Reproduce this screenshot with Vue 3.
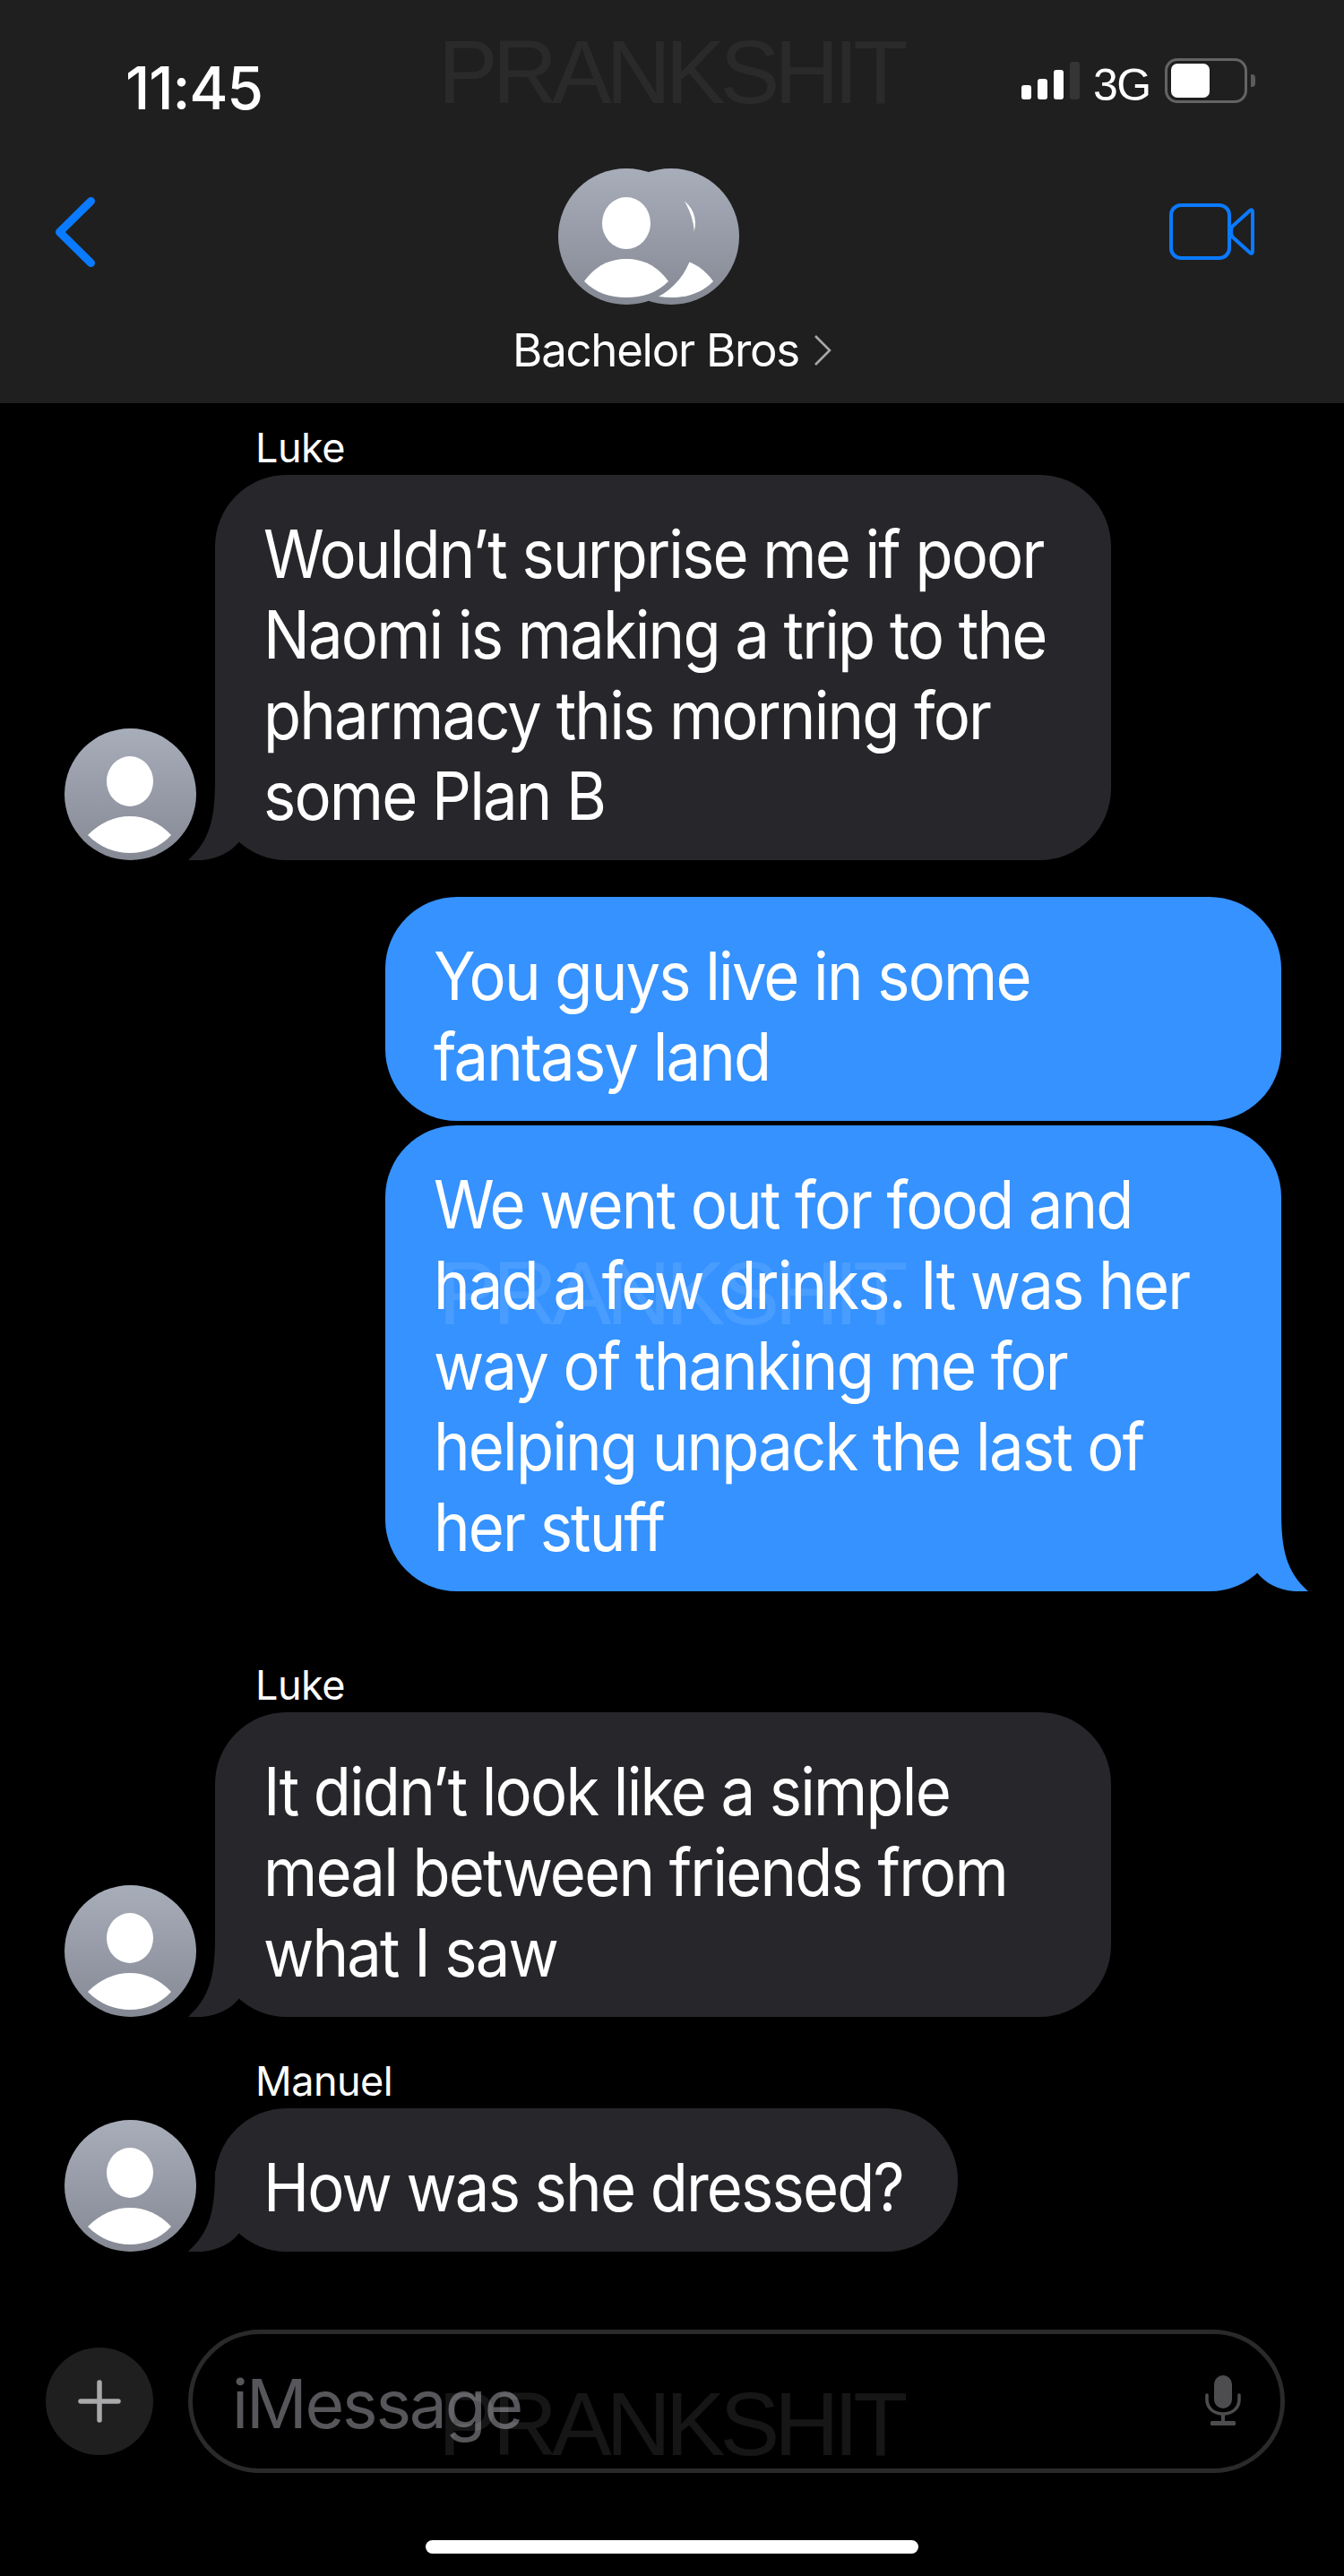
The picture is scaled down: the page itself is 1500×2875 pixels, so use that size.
<script setup>
const lukeOne = ['Wouldn’t surprise me if poor', 'Naomi is making a trip to the', 'pharmacy this morning for', 'some Plan B']
const mineOne = ['You guys live in some', 'fantasy land']
const mineTwo = ['We went out for food and', 'had a few drinks. It was her', 'way of thanking me for', 'helping unpack the last of', 'her stuff']
const lukeTwo = ['It didn’t look like a simple', 'meal between friends from', 'what I saw']
</script>

<template>
  <div class="page">
    <header class="head">
      <div class="status">
        <span class="time">11:45</span>
        <div class="status-right">
          <div class="bars"><i class="b1"></i><i class="b2"></i><i class="b3"></i><i class="b4"></i></div>
          <span class="net">3G</span>
          <div class="battery"><div class="fill"></div></div>
          <div class="nub"></div>
        </div>
      </div>
      <div class="nav">
        <svg class="back" viewBox="0 0 44 78" width="44" height="78"><path d="M39.5 4.5 L4.5 39 L39.5 73.5" fill="none" stroke="#0a7aff" stroke-width="9" stroke-linecap="round" stroke-linejoin="round"/></svg>
        <svg class="group" viewBox="0 0 202 152" width="202" height="152">
          <defs>
            <linearGradient id="gg" x1="0" y1="0" x2="0" y2="1"><stop offset="0" stop-color="#a8adba"/><stop offset="1" stop-color="#858994"/></linearGradient>
            <clipPath id="rc"><circle cx="126" cy="76" r="76"/></clipPath>
          </defs>
          <circle cx="126" cy="76" r="76" fill="url(#gg)"/>
          <g clip-path="url(#rc)">
            <ellipse cx="126" cy="61" rx="27" ry="29" fill="#fff"/>
            <path d="M79 126 C92 108 108 101 126 101 C144 101 160 108 173 126 C160 139 144 144 126 144 C108 144 92 139 79 126Z" fill="#fff"/>
          </g>
          <circle cx="76" cy="76" r="76" fill="url(#gg)"/>
          <ellipse cx="76" cy="61" rx="27" ry="29" fill="#fff"/>
          <path d="M29 126 C42 108 58 101 76 101 C94 101 110 108 123 126 C110 139 94 144 76 144 C58 144 42 139 29 126Z" fill="#fff"/>
        </svg>
        <svg class="video" viewBox="0 0 95 63" width="95" height="63">
          <rect x="2" y="2" width="65" height="59" rx="11" fill="none" stroke="#0a7aff" stroke-width="4"/>
          <path d="M70 26 L90 8 Q93 6 93 10 L93 53 Q93 57 90 55 L70 37 Q68 31.5 70 26Z" fill="none" stroke="#0a7aff" stroke-width="4" stroke-linejoin="round"/>
        </svg>
      </div>
      <div class="title">
        <span>Bachelor Bros</span>
        <svg viewBox="0 0 20 34" width="20" height="34"><path d="M2 1 L18 17 L2 33" fill="none" stroke="#a8a8a8" stroke-width="2.6"/></svg>
      </div>
    </header>

    <main class="thread">
      <div class="name first">Luke</div>
      <div class="row">
        <svg class="avatar" viewBox="0 0 147 147" width="147" height="147">
          <defs><linearGradient id="ag" x1="0" y1="0" x2="0" y2="1"><stop offset="0" stop-color="#a8adba"/><stop offset="1" stop-color="#858994"/></linearGradient></defs>
          <circle cx="73.5" cy="73.5" r="73.5" fill="url(#ag)"/>
          <ellipse cx="73" cy="59" rx="26" ry="28" fill="#fff"/>
          <path d="M26 119 C40 105 56 98 73 98 C90 98 106 105 119 119 C106 133 90 139 73 139 C56 139 40 133 26 119Z" fill="#fff"/>
        </svg>
        <div class="bubble in wide">
          <svg class="tail tail-l" viewBox="0 0 110 90" width="110" height="90"><path d="M30 0 C30 45 24 68 0 90 C26 92 46 84 58 68 L110 90 L110 0Z" fill="#27272b"/></svg>
          <div class="text"><div v-for="l in lukeOne" :key="l">{{ l }}</div></div>
        </div>
      </div>

      <div class="bubble out mine-first">
        <div class="text"><div v-for="l in mineOne" :key="l">{{ l }}</div></div>
      </div>
      <div class="bubble out mine-next">
        <svg class="tail tail-r" viewBox="0 0 110 90" width="110" height="90"><path d="M80 0 C80 45 86 68 110 90 C84 92 64 84 52 68 L0 90 L0 0Z" fill="#3592ff"/></svg>
        <div class="text"><div v-for="l in mineTwo" :key="l">{{ l }}</div></div>
      </div>

      <div class="name second">Luke</div>
      <div class="row">
        <svg class="avatar" viewBox="0 0 147 147" width="147" height="147">
          <circle cx="73.5" cy="73.5" r="73.5" fill="url(#ag)"/>
          <ellipse cx="73" cy="59" rx="26" ry="28" fill="#fff"/>
          <path d="M26 119 C40 105 56 98 73 98 C90 98 106 105 119 119 C106 133 90 139 73 139 C56 139 40 133 26 119Z" fill="#fff"/>
        </svg>
        <div class="bubble in wide">
          <svg class="tail tail-l" viewBox="0 0 110 90" width="110" height="90"><path d="M30 0 C30 45 24 68 0 90 C26 92 46 84 58 68 L110 90 L110 0Z" fill="#27272b"/></svg>
          <div class="text"><div v-for="l in lukeTwo" :key="l">{{ l }}</div></div>
        </div>
      </div>

      <div class="name third">Manuel</div>
      <div class="row">
        <svg class="avatar" viewBox="0 0 147 147" width="147" height="147">
          <circle cx="73.5" cy="73.5" r="73.5" fill="url(#ag)"/>
          <ellipse cx="73" cy="59" rx="26" ry="28" fill="#fff"/>
          <path d="M26 119 C40 105 56 98 73 98 C90 98 106 105 119 119 C106 133 90 139 73 139 C56 139 40 133 26 119Z" fill="#fff"/>
        </svg>
        <div class="bubble in short">
          <svg class="tail tail-l" viewBox="0 0 110 90" width="110" height="90"><path d="M30 0 C30 45 24 68 0 90 C26 92 46 84 58 68 L110 90 L110 0Z" fill="#27272b"/></svg>
          <div class="text"><div>How was she dressed?</div></div>
        </div>
      </div>
    </main>

    <footer class="composer">
      <div class="plus">
        <svg viewBox="0 0 48 48" width="48" height="48"><path d="M24 3 V45 M3 24 H45" stroke="#a9a9ab" stroke-width="5.5" stroke-linecap="round"/></svg>
      </div>
      <div class="field">
        <span class="placeholder">iMessage</span>
        <svg class="mic" viewBox="0 0 40 56" width="40" height="56">
          <rect x="10" y="0" width="20" height="37" rx="10" fill="#4d4d4f"/>
          <path d="M2 22 V27 C2 37 10 43 20 43 C30 43 38 37 38 27 V22" fill="none" stroke="#4d4d4f" stroke-width="3.6" stroke-linecap="round"/>
          <path d="M20 43 V53" stroke="#4d4d4f" stroke-width="4"/>
          <rect x="6" y="51" width="28" height="5" rx="1.5" fill="#4d4d4f"/>
        </svg>
      </div>
    </footer>
    <div class="home"></div>

    <div class="mark mark-top">PRANKSHIT</div>
    <div class="mark mark-mid">PRANKSHIT</div>
    <div class="mark mark-bot">PRANKSHIT</div>
  </div>
</template>

<style>
html, body { margin: 0; background: #000; }
</style>

<style scoped>
.page {
  position: relative;
  width: 1500px;
  height: 2875px;
  background: #000;
  overflow: hidden;
  display: flex;
  flex-direction: column;
  color: #fff;
  font-family: Inter, "Liberation Sans", sans-serif;
}
.head {
  height: 450px;
  background: #1f1f1f;
  flex: none;
  display: flex;
  flex-direction: column;
}
.status {
  height: 188px;
  display: flex;
  justify-content: space-between;
  padding: 0 99px 0 140px;
  align-items: flex-start;
  box-sizing: border-box;
}
.time {
  margin-top: 58px;
  font-size: 66px;
  line-height: 80px;
  font-weight: 500;
  letter-spacing: -1.2px;
}
.status-right {
  display: flex;
  align-items: flex-start;
  margin-top: 65px;
}
.bars {
  display: flex;
  align-items: flex-end;
  gap: 7px;
  height: 42px;
  margin-top: 4px;
  width: 65px;
}
.bars i { display: block; width: 11px; background: #fff; border-radius: 3px; }
.bars .b1 { height: 16px; }
.bars .b2 { height: 23px; }
.bars .b3 { height: 33px; }
.bars .b4 { height: 42px; background: #353535; }
.net {
  margin-left: 15px;
  width: 64px;
  font-family: "Liberation Sans", sans-serif;
  font-size: 50px;
  line-height: 54px;
  letter-spacing: -1.5px;
  margin-top: 3px;
}
.battery {
  margin-left: 16px;
  width: 92px;
  height: 50px;
  box-sizing: border-box;
  border: 3px solid #646464;
  border-radius: 14px;
  padding: 3px 4px;
}
.fill { width: 43px; height: 38px; background: #fff; border-radius: 7px; }
.nub {
  width: 5px;
  height: 14px;
  margin: 18px 0 0 4px;
  background: #5c5c5c;
  border-radius: 0 4px 4px 0;
}
.nav {
  height: 152px;
  display: flex;
  justify-content: space-between;
  align-items: center;
  padding: 0 100px 0 62px;
  position: relative;
}
.back { margin-right: 517px; margin-top: -10px; flex: none; }
.group { flex: none; }
.video { margin-left: auto; margin-top: -11px; flex: none; }
.title {
  margin-top: 20px;
  display: flex;
  justify-content: center;
  align-items: center;
  gap: 16px;
  font-size: 51px;
  line-height: 62px;
  letter-spacing: -1.3px;
}
.thread {
  flex: 1;
  display: flex;
  flex-direction: column;
  min-height: 0;
}
.name {
  height: 60px;
  padding-left: 285px;
  font-size: 45px;
  line-height: 60px;
  letter-spacing: -0.5px;
}
.name.first { margin-top: 20px; }
.name.second { margin-top: 75px; }
.name.third { margin-top: 42px; }
.row {
  display: flex;
  align-items: flex-end;
  gap: 21px;
  padding-left: 72px;
}
.avatar { flex: none; }
.bubble {
  position: relative;
  box-sizing: border-box;
  border-radius: 80px;
  padding: 43px 54px 27px;
  font-size: 74px;
  line-height: 90px;
  letter-spacing: -2px;
  white-space: nowrap;
}
.in { background: #27272b; }
.wide { width: 1000px; }
.short { width: 829px; }
.out {
  background: #3592ff;
  width: 1000px;
  align-self: flex-end;
  margin-right: 70px;
}
.mine-first { margin-top: 41px; }
.mine-next { margin-top: 5px; }
.text {
  position: relative;
  transform: scaleX(.93);
  transform-origin: left center;
}
.tail { position: absolute; bottom: 0; }
.tail-l { left: -30px; }
.tail-r { right: -30px; }
.composer {
  display: flex;
  align-items: center;
  padding: 0 66px 0 51px;
  gap: 39px;
  flex: none;
  height: 160px;
}
.plus {
  width: 120px;
  height: 120px;
  flex: none;
  border-radius: 50%;
  background: #1f1f1f;
  display: flex;
  align-items: center;
  justify-content: center;
}
.field {
  flex: 1;
  height: 160px;
  box-sizing: border-box;
  border: 5px solid #2a2a2a;
  border-radius: 80px;
  display: flex;
  align-items: center;
  justify-content: space-between;
  padding: 0 44px 0 44px;
}
.placeholder {
  font-size: 75px;
  letter-spacing: -2.2px;
  color: #57575b;
  margin-top: 5px;
}
.mic { margin-top: -2px; }
.home {
  flex: none;
  width: 550px;
  height: 15px;
  margin: 75px auto 25px;
  background: #fff;
  border-radius: 8px;
}
.mark {
  position: absolute;
  left: 489px;
  font-family: "Liberation Sans", sans-serif;
  font-size: 100px;
  line-height: 100px;
  letter-spacing: -6px;
  pointer-events: none;
}
.mark-top { top: 30px; color: rgba(255,255,255,.05); }
.mark-mid { top: 1393px; color: rgba(255,255,255,.1); }
.mark-bot { top: 2655px; color: rgba(255,255,255,.085); }
</style>
